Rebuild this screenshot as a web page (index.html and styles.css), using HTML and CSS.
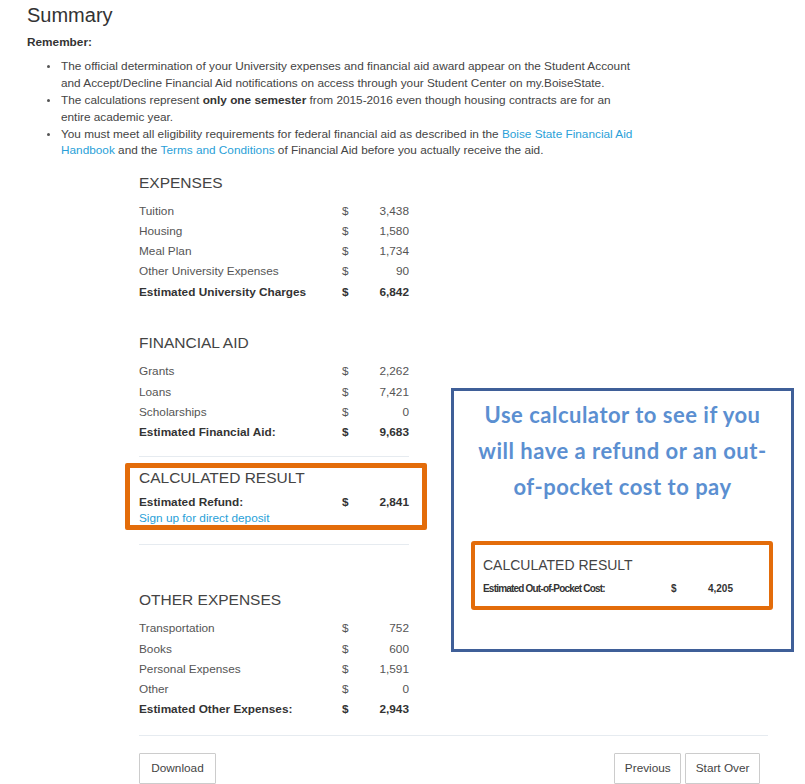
FILE: index.html
```html
<!DOCTYPE html>
<html lang="en">
<head>
<meta charset="utf-8">
<title>Summary</title>
<link rel="stylesheet" href="styles.css">
</head>
<body>
<div class="page">
  <h1 class="title">Summary</h1>
  <p class="remember">Remember:</p>
  <ul class="notes">
    <li>The official determination of your University expenses and financial aid award appear on the Student Account and Accept/Decline Financial Aid notifications on access through your Student Center on my.BoiseState.</li>
    <li>The calculations represent <b>only one semester</b> from 2015-2016 even though housing contracts are for an entire academic year.</li>
    <li>You must meet all eligibility requirements for federal financial aid as described in the <a href="#">Boise State Financial Aid Handbook</a> and the <a href="#">Terms and Conditions</a> of Financial Aid before you actually receive the aid.</li>
  </ul>

  <div class="calc">
    <section class="group">
      <h2 class="group-title">EXPENSES</h2>
      <div class="row"><span>Tuition</span><span>$</span><span class="amt">3,438</span></div>
      <div class="row"><span>Housing</span><span>$</span><span class="amt">1,580</span></div>
      <div class="row"><span>Meal Plan</span><span>$</span><span class="amt">1,734</span></div>
      <div class="row"><span>Other University Expenses</span><span>$</span><span class="amt">90</span></div>
      <div class="row total"><span>Estimated University Charges</span><span>$</span><span class="amt">6,842</span></div>
    </section>

    <section class="group group-aid">
      <h2 class="group-title">FINANCIAL AID</h2>
      <div class="row"><span>Grants</span><span>$</span><span class="amt">2,262</span></div>
      <div class="row"><span>Loans</span><span>$</span><span class="amt">7,421</span></div>
      <div class="row"><span>Scholarships</span><span>$</span><span class="amt">0</span></div>
      <div class="row total"><span>Estimated Financial Aid:</span><span>$</span><span class="amt">9,683</span></div>
      <div class="rule rule-aid"></div>
    </section>

    <section class="result">
      <h2 class="group-title result-title">CALCULATED RESULT</h2>
      <div class="row total"><span>Estimated Refund:</span><span>$</span><span class="amt">2,841</span></div>
      <a class="deposit" href="#">Sign up for direct deposit</a>
    </section>
    <div class="rule rule-result"></div>

    <section class="group group-other">
      <h2 class="group-title">OTHER EXPENSES</h2>
      <div class="row"><span>Transportation</span><span>$</span><span class="amt">752</span></div>
      <div class="row"><span>Books</span><span>$</span><span class="amt">600</span></div>
      <div class="row"><span>Personal Expenses</span><span>$</span><span class="amt">1,591</span></div>
      <div class="row"><span>Other</span><span>$</span><span class="amt">0</span></div>
      <div class="row total"><span>Estimated Other Expenses:</span><span>$</span><span class="amt">2,943</span></div>
    </section>

    <div class="rule rule-full"></div>

    <div class="actions">
      <button class="btn btn-download" type="button">Download</button>
      <div class="actions-right">
        <button class="btn" type="button">Previous</button>
        <button class="btn" type="button">Start Over</button>
      </div>
    </div>
  </div>

  <aside class="callout">
    <p class="callout-text">Use calculator to see if you<br>will have a refund or an out-<br>of-pocket cost to pay</p>
    <div class="callout-result">
      <h2 class="callout-title">CALCULATED RESULT</h2>
      <div class="callout-row"><span class="callout-label">Estimated Out-of-Pocket Cost:</span><span>$</span><span class="amt">4,205</span></div>
    </div>
  </aside>
</div>
</body>
</html>
```

FILE: styles.css
```css
* {
  box-sizing: border-box;
}

body {
  margin: 0;
  background: #ffffff;
  font-family: "Liberation Sans", Arial, sans-serif;
  font-size: 11.8px;
  color: #444444;
}

.page {
  position: relative;
  height: 784px;
  overflow: hidden;
  padding: 4px 0 0 27px;
}

.title {
  margin: 0;
  font-size: 20px;
  line-height: 22px;
  font-weight: normal;
  color: #333333;
}

.remember {
  margin: 8.4px 0 0;
  font-weight: bold;
  line-height: 17px;
  color: #333333;
}

.notes {
  list-style: none;
  margin: 7.1px 0 0;
  padding: 0 0 0 34px;
  width: 614px;
  line-height: 16.8px;
}

.notes li {
  position: relative;
}

.notes li::before {
  content: "";
  position: absolute;
  left: -14px;
  top: 7px;
  width: 3px;
  height: 3px;
  border-radius: 50%;
  background: #555555;
}

.notes b {
  color: #333333;
}

.notes a,
.deposit {
  color: #2a9fd8;
  text-decoration: none;
}

.calc {
  margin: 13.3px 0 0 112px;
  width: 629px;
}

.group {
  width: 270px;
}

.group-aid {
  margin-top: 31.4px;
}

.group-other {
  margin-top: 45.3px;
}

.group-title {
  margin: 0 0 8px;
  font-size: 15.5px;
  line-height: 20px;
  font-weight: normal;
  color: #444444;
}

.row {
  display: grid;
  grid-template-columns: 1fr 20px 47px;
  line-height: 20.3px;
  color: #555555;
}

.amt {
  text-align: right;
}

.row.total {
  font-weight: bold;
  color: #333333;
}

.rule {
  height: 1px;
  background: #e6ebf0;
}

.rule-aid {
  margin-top: 13px;
}

.result {
  width: 302px;
  margin: 6px 0 0 -14px;
  border: 5px solid #e36c0a;
  border-radius: 2px;
  padding: 0.6px 13px 0 9px;
}

.result-title {
  margin-bottom: 3.4px;
}

.deposit {
  display: block;
  line-height: 13px;
}

.rule-result {
  width: 270px;
  margin-top: 14px;
}

.rule-full {
  margin-top: 15px;
}

.actions {
  display: flex;
  justify-content: space-between;
  margin-top: 17px;
}

.actions-right {
  display: flex;
  gap: 4px;
  margin-right: 8px;
}

.btn {
  height: 31px;
  padding: 0 9.5px;
  border: 1px solid #cccccc;
  border-radius: 1px;
  background: #ffffff;
  font-family: inherit;
  font-size: 11.8px;
  color: #444444;
}

.btn-download {
  min-width: 77px;
}

.callout {
  position: absolute;
  left: 451px;
  top: 388px;
  width: 343px;
  height: 264px;
  border: 3px solid #3f5f98;
  padding-top: 5.7px;
  background: #ffffff;
}

.callout-text {
  margin: 0;
  font-family: Lato, "Open Sans", sans-serif;
  font-weight: bold;
  font-size: 22px;
  letter-spacing: 0.5px;
  line-height: 36px;
  text-align: center;
  color: #5b8fd1;
}

.callout-result {
  margin: 36.3px 18px 0 17px;
  border: 4px solid #e36c0a;
  border-radius: 3px;
  padding: 11px 8px 10px;
}

.callout-title {
  margin: 0 0 8px;
  font-size: 14px;
  line-height: 18px;
  font-weight: normal;
  color: #444444;
}

.callout-row {
  display: grid;
  grid-template-columns: 188px 20px 42px;
  font-size: 10px;
  line-height: 14px;
  font-weight: bold;
  color: #333333;
}

.callout-label {
  letter-spacing: -0.8px;
  white-space: nowrap;
}
```
